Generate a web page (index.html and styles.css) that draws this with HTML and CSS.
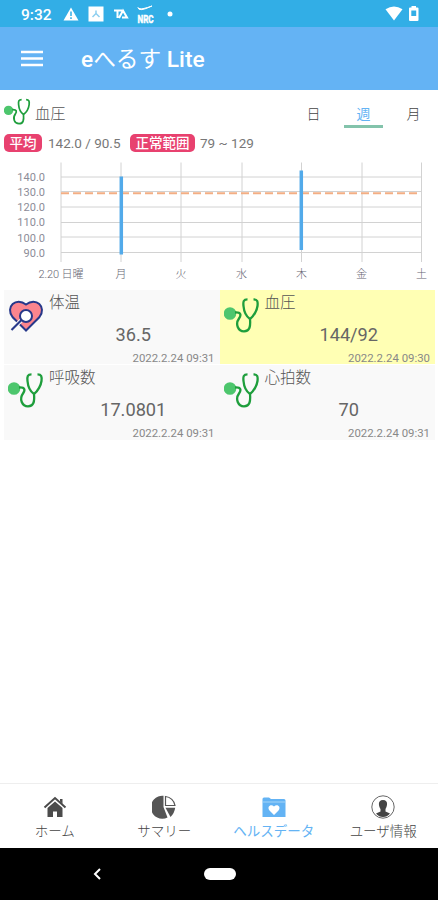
FILE: index.html
```html
<!DOCTYPE html>
<html lang="ja">
<head>
<meta charset="utf-8">
<title>eへるす Lite</title>
<link rel="stylesheet" href="styles.css">
</head>
<body>
<svg class="defs" aria-hidden="true">
  <symbol id="steth" viewBox="0 0 36 36">
    <circle cx="6" cy="16.500" r="6.300" fill="#4dc66d"/>
    <path d="M11 15.500C17 15 17.500 18 15 21.500C11 27 14 34.300 20 34.300C26 34.300 26.600 29 26 22M23.500 2.300C19.500 2.300 19 4.500 19.500 9C20 15 23 20 26 22C30 19 33 13 33.500 9C34 4.500 33.500 2.300 29.500 2.300" fill="none" stroke="#1e9e3c" stroke-width="2.300"/>
  </symbol>
</svg>
<div class="screen">
  <header class="status">
    <span class="clock">9:32</span>
    <svg class="notices" width="150" height="27" viewBox="52 0 150 27">
      <path d="M71 7.500L78.500 20.500H63.500Z" fill="#fff"/>
      <path d="M71 11.500V16M71 17.300V19" stroke="#32aee6" stroke-width="1.500"/>
      <rect x="88.500" y="6.500" width="15" height="15" fill="#fff"/>
      <path d="M96 10.500V13.500L92.500 17M96 13.500L99.500 17" stroke="#8dcff0" stroke-width="1.500" fill="none"/>
      <path d="M114 10.500H122M117.500 10.500V18M119 18L123 10.500L127 17.500H122" stroke="#fff" stroke-width="2" fill="none"/>
      <path d="M138 7.500Q138.500 12.500 152 6Q142 9.500 140 8.700Q138.500 8.500 138 7.500Z" fill="#fff" stroke="#fff" stroke-width="1"/>
      <text x="137.500" y="22.500" class="nrc" textLength="16" lengthAdjust="spacingAndGlyphs">NRC</text>
      <circle cx="170" cy="14" r="2.500" fill="#fff"/>
    </svg>
    <svg class="signals" width="36" height="27" viewBox="384 0 36 27" fill="#fff">
      <path d="M385.500 9.300Q394 3.500 402.500 9.300L394 20.500Z"/>
      <path fill-rule="evenodd" d="M411.500 6H416V7.500H417.500Q418.500 7.500 418.500 8.500V20Q418.500 21 417.500 21H410Q409 21 409 20V8.500Q409 7.500 410 7.500H411.500ZM411.300 10.500V16H416.200V10.500Z"/>
    </svg>
  </header>
  <div class="appbar">
    <svg width="22" height="18" viewBox="0 0 22 18"><path d="M0 3H22M0 9.500H22M0 16H22" stroke="#fff" stroke-width="2.400"/></svg>
    <h1>e<span>へるす</span> Lite</h1>
  </div>
  <main>
    <div class="heading">
      <svg class="headicon"><use href="#steth"/></svg>
      <h2>血圧</h2>
      <nav class="range"><span>日</span><span class="on">週</span><span>月</span></nav>
    </div>
    <div class="facts">
      <b class="avg">平均</b><span class="mean">142.0 / 90.5</span><b class="normal">正常範囲</b><span class="limits">79 ~ 129</span>
    </div>
    <svg class="chart" width="438" height="132" viewBox="0 158 438 132">
      <path class="grid" d="M61 162.500V262M121 162.500V262M181 162.500V262M242 162.500V262M301.500 162.500V262M362 162.500V262M421.500 162.500V262M61 177H422M61 191.500H422M61 207H422M61 222.500H422M61 237H422M61 252.500H422"/>
      <path class="limit" d="M61 193.200H421"/>
      <path class="bars" d="M121.300 176.500V254.500M301.300 170.500V250"/>
      <g class="yaxis">
        <text x="45" y="180.500">140.0</text><text x="45" y="195.500">130.0</text><text x="45" y="211">120.0</text><text x="45" y="226">110.0</text><text x="45" y="241.500">100.0</text><text x="45" y="256.500">90.0</text>
      </g>
      <g class="xaxis">
        <text x="61" y="277.500" textLength="45">2.20 日曜</text><text x="121" y="277.500">月</text><text x="181" y="277.500">火</text><text x="241.500" y="277.500">水</text><text x="301.500" y="277.500">木</text><text x="361.500" y="277.500">金</text><text x="421.500" y="277.500">土</text>
      </g>
    </svg>
    <section class="cards">
      <article>
        <svg class="icon heart" viewBox="0 0 36 36">
          <path d="M18 33.500L4.500 20C-3 10 8 -.5 18 7.500C28 -.5 39 10 31.500 20Z" fill="#fb858e" stroke="#27388a" stroke-width="2"/>
          <path d="M13.500 23L3.500 33" stroke="#f9f9f9" stroke-width="4"/>
          <path d="M13.500 23L3.500 33" stroke="#27388a" stroke-width="2.200"/>
          <circle cx="18" cy="19" r="6" fill="#fff" stroke="#27388a" stroke-width="2"/>
        </svg>
        <h3>体温</h3><strong>36.5</strong><time>2022.2.24 09:31</time>
      </article>
      <article class="selected"><svg class="icon"><use href="#steth"/></svg><h3>血圧</h3><strong>144/92</strong><time>2022.2.24 09:30</time></article>
      <article><svg class="icon"><use href="#steth"/></svg><h3>呼吸数</h3><strong>17.0801</strong><time>2022.2.24 09:31</time></article>
      <article><svg class="icon"><use href="#steth"/></svg><h3>心拍数</h3><strong>70</strong><time>2022.2.24 09:31</time></article>
    </section>
  </main>
  <nav class="tabs">
    <a><svg viewBox="0 0 24 24" fill="#4b4b4b"><path d="M1.500 12.500L12 3L22.500 12.500" fill="none" stroke="#4b4b4b" stroke-width="2"/><path d="M12 6.500L19.500 13V22H14V16.500H10V22H4.500V13ZM17 4H19.500V9L17 6.500Z"/></svg>ホーム</a>
    <a><svg viewBox="0 0 24 24" fill="#555"><path d="M11.500 .8V12L15.500 22.500A11.500 11.500 0 1 1 11.500 .8Z"/><path d="M13.500 12.700H23.200Q22.500 18 18.500 22Z"/><path d="M13.500 1.500A10.500 10.500 0 0 1 23 10.500H13.500Z" fill="#fff" stroke="#555" stroke-width="1.200"/></svg>サマリー</a>
    <a class="on"><svg viewBox="0 0 24 24"><path d="M.5 4Q.5 2.500 2 2.500H7L9 4H22Q23.500 4 23.500 5.500V22H.5Z" fill="#63b3f4"/><path d="M1 7H23" stroke="#b9def9" stroke-width=".8"/><path d="M12 20L7.500 15.500C4.500 11.500 9 8.500 12 11.500C15 8.500 19.500 11.500 16.500 15.500Z" fill="#fff"/></svg>ヘルスデータ</a>
    <a><svg viewBox="0 0 24 24"><circle cx="12" cy="12" r="11.200" fill="#fff" stroke="#666" stroke-width="1"/><path d="M12 5C18 5 16 12 14.500 14V16.500L19 18.500Q16 22 12 22Q8 22 5 18.500L9.500 16.500V14C8 12 6 5 12 5Z" fill="#444"/></svg>ユーザ情報</a>
  </nav>
  <footer class="system">
    <svg width="8" height="12" viewBox="0 0 8 12"><path d="M7 1L2 6L7 11" fill="none" stroke="#fff" stroke-width="2"/></svg>
    <i class="pill"></i>
    <span></span>
  </footer>
</div>
</body>
</html>
```
FILE: styles.css
```css
* { box-sizing: border-box; }
body {
  margin: 0;
  font-family: Roboto, "Noto Sans CJK JP", sans-serif;
  color: #777;
  background: #fff;
}
h1, h2, h3 { margin: 0; font-weight: 400; }
svg { display: block; flex: none; }
.defs { display: none; }
.screen { width: 438px; height: 900px; display: flex; flex-direction: column; overflow: hidden; }
.status { height: 27px; flex: none; display: flex; background: #32aee6; color: #fff; }
.clock { width: 52px; padding-left: 21px; font-size: 15.500px; line-height: 30px; font-weight: 500; white-space: nowrap; }
.nrc { font: 700 11px Roboto, sans-serif; fill: #fff; stroke: #fff; stroke-width: .5; }
.signals { margin-left: 182px; }
.appbar { height: 63px; flex: none; display: flex; align-items: center; gap: 38px; padding: 3px 21px 0; background: #64b3f4; color: #fff; }
.appbar svg { margin-top: -5px; }
.appbar h1 { font-size: 22.700px; font-weight: 500; line-height: 30px; white-space: nowrap; }
.appbar h1 span { font-weight: 400; }
main { flex: 1; }
.heading { height: 42px; display: flex; padding: 8px 17px 0 4px; }
.headicon { width: 27px; height: 27px; }
.heading h2 { margin-left: 4px; font-size: 15.200px; line-height: 32px; font-weight: 300; color: #555; }
.range { margin-left: auto; display: flex; gap: 11px; font-size: 14px; line-height: 32px; font-weight: 300; color: #444; text-align: center; margin-right: -12px; }
.range span { width: 39px; height: 30px; border-bottom: 3px solid transparent; }
.range .on { color: #64b3f4; border-color: #83c3ab; font-weight: 400; }
.facts { height: 26px; display: flex; align-items: flex-start; padding: 2px 4px; font-size: 13.500px; line-height: 19px; white-space: nowrap; }
.facts b { height: 18px; border-radius: 5px; background: #e8416f; color: #fff; font-size: 13.500px; line-height: 19px; font-weight: 500; text-align: center; }
.avg { width: 38px; }
.normal { width: 65px; }
.mean { width: 88px; padding-left: 6px; }
.limits { padding-left: 5px; }
.grid { fill: none; stroke: #d2d2d2; stroke-width: 1; }
.limit { stroke: #f3ae84; stroke-width: 2; stroke-dasharray: 8 4; }
.bars { stroke: #52aaea; stroke-width: 3.500; }
.yaxis, .xaxis { font-size: 11px; fill: #8c8c98; }
.yaxis { text-anchor: end; }
.xaxis { text-anchor: middle; font-weight: 300; fill: #666672; }
.cards { display: grid; grid-template-columns: 215.500px 215.500px; grid-template-rows: 74px 75px; gap: 1px 0; margin-left: 4px; }
.cards article { display: grid; grid-template-columns: 36px 1fr; grid-template-rows: 26px 36px 12px; padding-left: 4px; background: #f9f9f9; }
.cards .selected { background: #ffffb4; }
.icon { width: 36px; height: 36px; margin-top: 7px; grid-row: 1 / 3; }
.cards h3 { padding-left: 5px; font-size: 15.500px; line-height: 26px; font-weight: 300; color: #555; }
.cards strong { grid-column: 2; justify-self: center; margin-left: 3px; font-size: 18.200px; line-height: 37px; font-weight: 400; color: #666; }
.cards time { grid-column: 2; justify-self: end; padding-right: 5px; font-size: 11.400px; line-height: 12px; color: #888; }
.tabs { height: 65px; flex: none; display: grid; grid-template-columns: repeat(4, 1fr); border-top: 1px solid #eee; }
.tabs a { display: flex; flex-direction: column; align-items: center; padding-top: 11px; font-size: 13.500px; line-height: 24px; font-weight: 300; color: #444; white-space: nowrap; }
.tabs svg { width: 24px; height: 24px; }
.tabs .on { color: #64b3f4; font-weight: 400; }
.system { height: 52px; flex: none; display: grid; grid-template-columns: 194px 50px 194px; align-items: center; background: #000; }
.system svg { justify-self: center; }
.pill { width: 32px; height: 12px; margin-left: 10px; border-radius: 6px; background: #fff; }
```
